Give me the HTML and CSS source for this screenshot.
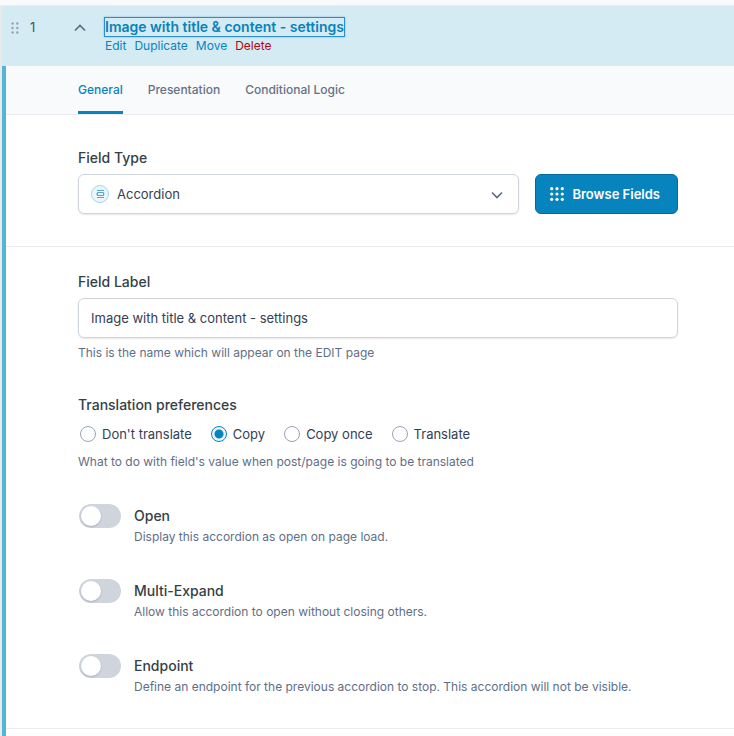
FILE: index.html
```
<!DOCTYPE html>
<html lang="en">
<head>
    <meta charset="UTF-8" />
    <title>Edit Field Group</title>
    <link rel="stylesheet" href="styles.css">
</head>
<body>
<div class="field-list">
    <div class="field-head">
        <svg class="drag" width="8" height="12" viewBox="0 0 8 12">
            <circle cx="1.5" cy="1.5" r="1.2"/><circle cx="6.3" cy="1.5" r="1.2"/>
            <circle cx="1.5" cy="6" r="1.2"/><circle cx="6.3" cy="6" r="1.2"/>
            <circle cx="1.5" cy="10.5" r="1.2"/><circle cx="6.3" cy="10.5" r="1.2"/>
        </svg>
        <span class="order">1</span>
        <svg class="toggle" width="12" height="8" viewBox="0 0 12 8"><path d="M1 6.5 6 1.5l5 5"/></svg>
        <div class="field-name">
            <a class="title" href="#">Image with title &amp; content - settings</a>
            <div class="row-actions">
                <a href="#">Edit</a>
                <a href="#">Duplicate</a>
                <a href="#">Move</a>
                <a class="delete" href="#">Delete</a>
            </div>
        </div>
    </div>
    <div class="settings">
        <nav class="tabs">
            <a class="current" href="#">General</a>
            <a href="#">Presentation</a>
            <a href="#">Conditional Logic</a>
        </nav>
        <div class="section type-section">
            <label class="label" for="type">Field Type</label>
            <div class="type-row">
                <div class="select-box">
                    <svg class="type-icon" width="18" height="18" viewBox="0 0 18 18">
                        <circle cx="9" cy="9" r="8.5" fill="#ebf5fa" stroke="#a5d7e9"/>
                        <path d="M6 5.5h7M6 12.5h7M6.5 7.5h6v3h-6zM5 9h1.5M12.5 9h1" fill="none" stroke="#50a9c8"/>
                    </svg>
                    <select id="type">
                        <option>Accordion</option>
                    </select>
                    <svg class="arrow" width="12" height="8" viewBox="0 0 12 8"><path d="M1 1.5l5 5 5-5"/></svg>
                </div>
                <button class="browse" type="button">
                    <svg width="14" height="14" viewBox="0 0 14 14" fill="#fff">
                        <circle cx="1.7" cy="1.7" r="1.6"/><circle cx="7" cy="1.7" r="1.6"/><circle cx="12.3" cy="1.7" r="1.6"/>
                        <circle cx="1.7" cy="7" r="1.6"/><circle cx="7" cy="7" r="1.6"/><circle cx="12.3" cy="7" r="1.6"/>
                        <circle cx="1.7" cy="12.3" r="1.6"/><circle cx="7" cy="12.3" r="1.6"/><circle cx="12.3" cy="12.3" r="1.6"/>
                    </svg>
                    Browse Fields
                </button>
            </div>
        </div>
        <div class="section">
            <div class="field">
                <label class="label" for="label">Field Label</label>
                <input class="text" id="label" type="text" value="Image with title &amp; content - settings" />
                <p class="hint">This is the name which will appear on the EDIT page</p>
            </div>
            <fieldset class="field">
                <legend class="label">Translation preferences</legend>
                <div class="radios">
                    <label><input type="radio" name="translate" />Don't translate</label>
                    <label><input type="radio" name="translate" checked />Copy</label>
                    <label><input type="radio" name="translate" />Copy once</label>
                    <label><input type="radio" name="translate" />Translate</label>
                </div>
                <p class="hint">What to do with field's value when post/page is going to be translated</p>
            </fieldset>
            <div class="switch-row">
                <input class="switch" type="checkbox" id="open" />
                <div>
                    <label class="label" for="open">Open</label>
                    <p class="hint">Display this accordion as open on page load.</p>
                </div>
            </div>
            <div class="switch-row">
                <input class="switch" type="checkbox" id="multi" />
                <div>
                    <label class="label" for="multi">Multi-Expand</label>
                    <p class="hint">Allow this accordion to open without closing others.</p>
                </div>
            </div>
            <div class="switch-row">
                <input class="switch" type="checkbox" id="endpoint" />
                <div>
                    <label class="label" for="endpoint">Endpoint</label>
                    <p class="hint">Define an endpoint for the previous accordion to stop. This accordion will not be visible.</p>
                </div>
            </div>
        </div>
    </div>
</div>
</body>
</html>
```
FILE: styles.css
```
* {margin:0; padding:0; box-sizing: border-box;}
body {
    display: flex;
    flex-direction: column;
    min-height: 100vh;
    padding-top: 5px;
    background-color: #f9fafb;
    color: #344054;
    font: 13px/20px Inter, "Liberation Sans", sans-serif;
}
a {
    color: #0783be;
    text-decoration: none;
}
input, select, button {
    font: inherit;
}
.field-list {
    display: flex;
    flex-direction: column;
    flex: 1;
    border-top: 1px solid #eaecf0;
    border-left: 2px solid #eaeaea;
}

/* header row */
.field-head {
    display: flex;
    align-items: flex-start;
    height: 60px;
    padding: 11px 9px;
    background-color: #d4ebf4;
}
.drag {
    margin-top: 5px;
    fill: #98a2b3;
}
.order {
    width: 44px;
    margin-left: 11px;
    color: #475467;
}
.toggle, .arrow {
    fill: none;
    stroke: #5d6b82;
    stroke-width: 1.7;
}
.toggle {
    margin: 7px 18px 0 0;
}
.title {
    display: block;
    border: 1px solid #2b8fce;
    box-shadow: 0 0 2px #7fb9dd;
    font-size: 14px;
    line-height: 18px;
    font-weight: 600;
}
.row-actions {
    display: flex;
    gap: 8px;
    padding: 0 1px;
    font-size: 12px;
    line-height: 18px;
}
.row-actions .delete {
    color: #b4060f;
}

/* open field */
.settings {
    flex: 1;
    border-left: 4px solid #54b6d7;
    background-color: #fff;
}
.tabs {
    display: flex;
    gap: 25px;
    padding: 0 72px;
    border-bottom: 1px solid #eaecf0;
    background-color: #f9fafb;
}
.tabs a {
    height: 48px;
    font-size: 12px;
    line-height: 48px;
    font-weight: 500;
    color: #667085;
}
.tabs .current {
    border-bottom: 3px solid #0783be;
    color: #0783be;
}
.section {
    padding: 24px 56px 32px 72px;
    border-bottom: 1px solid #eaecf0;
}
.type-section {
    padding-top: 32px;
}
.label {
    display: block;
    color: #344045;
    font-size: 14px;
    line-height: 22px;
    font-weight: 500;
}
.hint {
    color: #5f6e87;
    font-size: 12px;
    line-height: 18px;
}
.type-row {
    display: flex;
    gap: 16px;
    max-width: 600px;
    margin-top: 5px;
}
.select-box {
    position: relative;
    flex: 1;
}
.type-icon {
    position: absolute;
    left: 13px;
    top: 11px;
    pointer-events: none;
}
.arrow {
    position: absolute;
    right: 16px;
    top: 17px;
    pointer-events: none;
}
select, .text {
    display: block;
    width: 100%;
    height: 40px;
    border: 1px solid #d0d5dd;
    border-radius: 6px;
    background-color: #fff;
    box-shadow: 0 1px 2px rgba(16,24,40,.1);
    color: #344054;
}
select {
    appearance: none;
    padding: 0 38px;
}
.text {
    max-width: 600px;
    margin: 5px 0 6px;
    padding: 0 12px;
}
.browse {
    display: flex;
    align-items: center;
    gap: 8px;
    height: 40px;
    padding: 0 17px 0 14px;
    border: 1px solid #066998;
    border-radius: 6px;
    background-color: #0783be;
    color: #fff;
    font-weight: 600;
}
.field {
    margin-bottom: 32px;
    border: 0;
}
.radios {
    display: flex;
    flex-wrap: wrap;
    gap: 19px;
    padding: 8px 2px 9px;
}
.radios label {
    display: flex;
    align-items: center;
    gap: 6px;
}
.radios input {
    appearance: none;
    width: 16px;
    height: 16px;
    border: 1px solid #98a2b3;
    border-radius: 50%;
}
.radios input:checked {
    border-color: #0783be;
    background: radial-gradient(circle, #0783be 4px, #ebf5fa 5px);
}
.switch-row {
    display: flex;
    gap: 13px;
    padding: 1px 0 0 1px;
    margin-bottom: 32px;
}
.switch-row .label {
    line-height: 24px;
}
.switch-row:last-child {
    margin-bottom: 0;
}
.switch {
    appearance: none;
    width: 42px;
    height: 24px;
    padding: 2px;
    border-radius: 12px;
    background-color: #d0d5dd;
}
.switch::before {
    content: "";
    display: block;
    width: 20px;
    height: 20px;
    border-radius: 50%;
    background-color: #fff;
    box-shadow: 0 1px 2px rgba(16,24,40,.2);
}
```
